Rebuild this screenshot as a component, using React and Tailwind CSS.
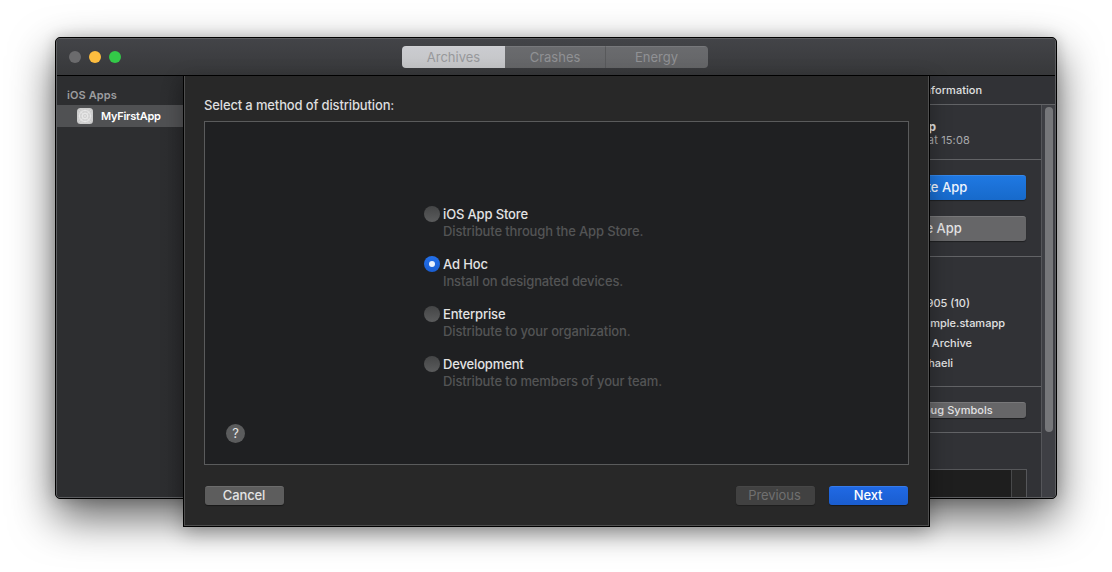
import React from "react";

const methods = [
  { name: "iOS App Store", note: "Distribute through the App Store." },
  { name: "Ad Hoc", note: "Install on designated devices." },
  { name: "Enterprise", note: "Distribute to your organization." },
  { name: "Development", note: "Distribute to members of your team." },
];

const details = [
  { text: "1905 (10)", pad: "pr-[71px]" },
  { text: "example.stamapp", pad: "pr-[36px]" },
  { text: "Archive", pad: "pr-[69px]" },
  { text: "chaeli", pad: "pr-[88px]" },
];

function TitleBar() {
  return (
    <header className="flex h-[37px] shrink-0 items-center border-b border-black bg-linear-to-b from-[#434448] to-[#37383a] pl-3">
      <div className="flex w-[333px] gap-2">
        <span className="size-3 rounded-full bg-[#6b6b6d]" />
        <span className="size-3 rounded-full bg-[#fdbd3f]" />
        <span className="size-3 rounded-full bg-[#33c948]" />
      </div>
      <div className="flex h-[22px] w-[306px] overflow-hidden rounded-[4px] text-[13px] text-[#909194]">
        <div className="flex w-[103px] items-center justify-center border-t border-t-[#d0d1d4] bg-linear-to-b from-[#cbccd0] to-[#c3c4c6] text-[#97989b]">Archives</div>
        <div className="flex w-[101px] items-center justify-center border-t border-r border-t-[#77787b] border-r-[#58595b] bg-linear-to-b from-[#6a6b6e] to-[#646567]">Crashes</div>
        <div className="flex w-[102px] items-center justify-center border-t border-t-[#77787b] bg-linear-to-b from-[#6a6b6e] to-[#646567] pr-px">Energy</div>
      </div>
    </header>
  );
}

function AppIcon() {
  return (
    <svg viewBox="0 0 16 16" className="size-4 shrink-0" fill="none" stroke="#f0f0f0" strokeWidth="0.8">
      <rect width="16" height="16" rx="3.5" fill="#cdcdcd" stroke="none" />
      <circle cx="8" cy="8" r="5.5" />
      <circle cx="8" cy="8" r="2.8" />
      <path d="M2 2l12 12M14 2L2 14M8 1v14M1 8h14M5 1v14M11 1v14M1 5h14M1 11h14" strokeWidth="0.35" />
    </svg>
  );
}

function Sidebar() {
  return (
    <aside className="w-[126px] shrink-0 bg-linear-to-r from-[#2d2e30] from-85% to-[#292a2c] pt-3">
      <div className="h-[17px] pl-[10px] text-[11px] leading-[15px] font-semibold tracking-[0.1px] text-[#9c9d9f]">iOS Apps</div>
      <div className="flex h-[22px] items-center gap-2 bg-[#505153] pl-5 text-[11px] font-semibold tracking-[-0.25px] text-white">
        <AppIcon />
        MyFirstApp
      </div>
    </aside>
  );
}

function Inspector() {
  return (
    <section className="flex w-[253px] shrink-0 flex-col bg-[#313236] text-[11px] font-medium text-[#e2e2e3]">
      <div className="flex h-[29px] shrink-0 items-center justify-center border-b border-[#626366] pl-[3px] tracking-[0.05px]">Archive Information</div>
      <div className="flex min-h-0 flex-1">
        <div className="flex flex-1 flex-col overflow-hidden">
          <div className="h-[55px] shrink-0 border-b border-[#626366] pt-[15px] text-right">
            <div className="pr-[105px] text-[12px] leading-[14px] font-bold">App</div>
            <div className="-mt-px pr-[71px] leading-[14px] font-normal tracking-[0.15px] text-[#a9aaac]">at 15:08</div>
          </div>
          <div className="flex h-[97px] shrink-0 flex-col gap-4 border-b border-[#626366] px-[15px] pt-[15px] pl-[17px] text-[13px]">
            <div className="flex h-[25px] shrink-0 items-center justify-center rounded-[3px] border-t border-[#3487ea] bg-linear-to-b from-[#1f78e2] to-[#176acb] tracking-[0.05px] text-[#eef5fd] shadow-[0_1px_1px_#0006]">Distribute App</div>
            <div className="flex h-[25px] shrink-0 items-center justify-center rounded-[3px] border-t border-[#78787a] bg-[#666668] shadow-[0_1px_1px_#0006]">Validate App</div>
          </div>
          <div className="h-[130px] shrink-0 border-b border-[#626366] pt-9">
            {details.map((d) => (
              <div key={d.text} className={"h-5 text-right leading-5 " + d.pad}>{d.text}</div>
            ))}
          </div>
          <div className="h-[46px] shrink-0 border-b border-[#626366] pt-[15px] pr-[15px] pl-[17px]">
            <div className="flex h-4 items-center justify-center rounded-[3px] border-t border-[#78787a] bg-[#666668] pl-px tracking-[0.05px] shadow-[0_1px_1px_#0006]">Download Debug Symbols</div>
          </div>
          <div className="flex flex-1 pt-9 pr-[14px] pl-[17px]">
            <div className="flex flex-1 border-t border-r border-[#56575a] bg-[#1e1e1e]">
              <div className="ml-auto w-[15px] border-l border-[#48494a] bg-[#2a2a2a]" />
            </div>
          </div>
        </div>
        <div className="w-[14px] border-l border-[#55565a] bg-[#3e3f44] pt-[2px] pl-[3px]">
          <div className="h-[325px] w-2 rounded-full bg-[#76777a]" />
        </div>
      </div>
    </section>
  );
}

function Radio({ on }) {
  return on ? (
    <span className="flex size-4 shrink-0 items-center justify-center rounded-full bg-linear-to-b from-[#2370ea] to-[#1a5ed2]">
      <span className="size-[6px] rounded-full bg-[#eaf1fd]" />
    </span>
  ) : (
    <span className="size-4 shrink-0 rounded-full bg-linear-to-b from-[#444546] to-[#5b5c5d]" />
  );
}

function Sheet() {
  return (
    <div className="absolute top-[76px] left-[183px] flex h-[451px] w-[747px] flex-col border border-t-0 border-black bg-[#282828] shadow-[0_6px_20px_#00000050]">
      <div className="flex flex-1 flex-col border border-t-0 border-[#4f4f4f] px-[19px]">
        <div className="h-[45px] pt-5 text-[13px] leading-[19px] font-medium tracking-[-0.14px] text-[#dededf]">Select a method of distribution:</div>
        <div className="flex h-[344px] w-[705px] flex-col border border-[#5a5b5c] bg-[#1f2022] pt-[84px] pl-[21px]">
          <div className="flex h-[218px] flex-col pl-[198px] text-[13px] leading-[17px]">
            {methods.map((m) => (
              <div key={m.name} className="flex h-[50px] gap-[3px]">
                <Radio on={m.name === "Ad Hoc"} />
                <div>
                  <div className="font-medium tracking-[-0.15px] text-[#e3e3e4]">{m.name}</div>
                  <div className="font-medium tracking-[-0.14px] text-[#535455]">{m.note}</div>
                </div>
              </div>
            ))}
          </div>
          <div className="flex size-[19px] items-center justify-center rounded-full bg-[#5b5c5d] text-[13px] text-[#e6e6e6]">?</div>
        </div>
        <div className="flex pt-[21px] pr-px pl-px text-[13px] tracking-[-0.1px] text-[#e4e4e4]">
          <div className="flex h-[19px] w-[79px] items-center justify-center rounded-[3px] border-t border-[#6c6c6c] bg-[#5d5d5d] pr-px font-medium shadow-[0_1px_1px_#0006]">Cancel</div>
          <div className="ml-auto flex h-[19px] w-[79px] items-center justify-center rounded-[3px] border-t border-[#474747] bg-[#414141] pr-[2px] text-[#707070] shadow-[0_1px_1px_#0004]">Previous</div>
          <div className="ml-[14px] flex h-[19px] w-[79px] items-center justify-center rounded-[3px] border-t border-[#367bec] bg-linear-to-b from-[#2069e4] to-[#1a5dcf] pr-px font-medium text-white shadow-[0_1px_1px_#0006]">Next</div>
        </div>
      </div>
    </div>
  );
}

export default function App() {
  return (
    <main className="relative h-[572px] w-[1112px] overflow-hidden bg-white pt-[37px] pl-[55px] font-['Inter','Liberation_Sans',sans-serif]">
      <div className="h-[462px] w-[1002px] rounded-[5px] border border-black bg-[#2c2d2f] shadow-[0_18px_44px_#000000a0,0_0_14px_#00000030]">
        <div className="flex h-full flex-col overflow-hidden rounded-[4px] border border-[#5c5d60]">
          <TitleBar />
          <div className="flex min-h-0 flex-1 justify-between">
            <Sidebar />
            <Inspector />
          </div>
        </div>
      </div>
      <Sheet />
    </main>
  );
}
